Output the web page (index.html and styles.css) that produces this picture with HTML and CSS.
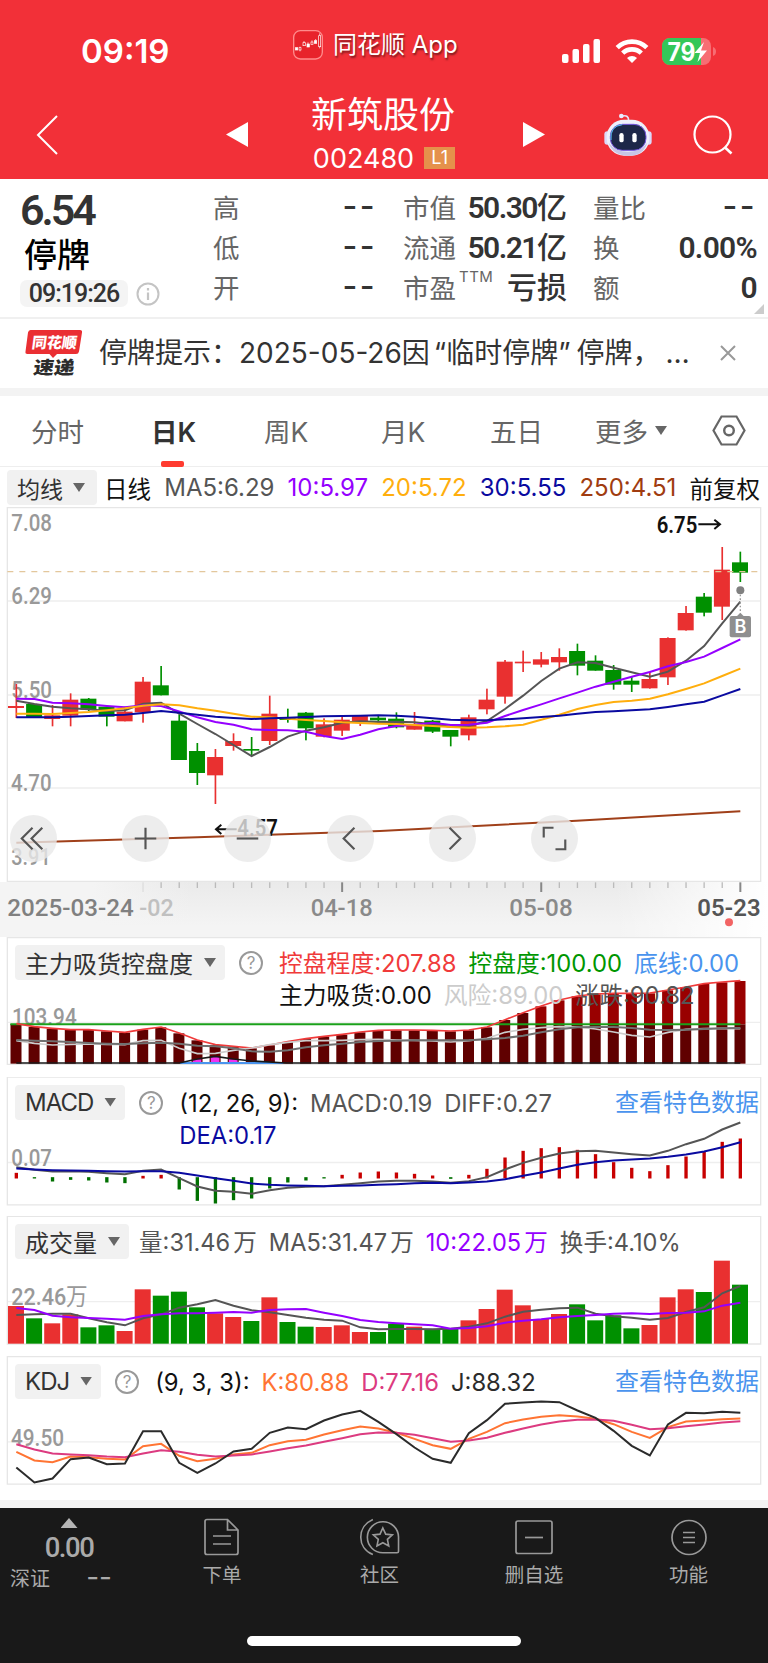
FILE: index.html
```html
<!DOCTYPE html>
<html lang="zh-CN">
	<head>
		<meta charset="UTF-8" />
		<meta name="viewport" content="width=device-width, initial-scale=1.0" />
		<title>新筑股份 002480</title>
		<link rel="stylesheet" href="styles.css">
	</head>
	<body>
		<header class="header">
			<div class="status-bar">
				<span class="clock">09:19</span>
				<div class="app-name">
					<svg width="30" height="30" viewBox="0 0 90 90">
						<rect x="2" y="2" width="86" height="85" rx="20" fill="#e8232b" stroke="#ff8c8c" stroke-width="4" />
						<g fill="#fff" stroke="#fff" stroke-width="2">
							<rect x="7" y="53" width="7" height="7" />
							<rect x="18" y="53" width="6" height="7" fill="none" />
							<path d="M21 50v3M21 60v4M33 33v5M45 37v6M57 31v5M68 27v5M80 10v6M80 50v5" />
							<rect x="30" y="38" width="7" height="9" fill="none" />
							<rect x="42" y="42" width="7" height="9" />
							<rect x="54" y="36" width="6" height="7" fill="none" />
							<rect x="64" y="32" width="7" height="8" />
							<rect x="77" y="17" width="6" height="33" fill="none" />
						</g>
					</svg>
					<span>同花顺 App</span>
				</div>
				<div class="status-icons">
					<svg width="40" height="26" viewBox="0 0 40 26" fill="#fff">
						<rect x="1" y="16" width="6.5" height="9" rx="2" />
						<rect x="11.5" y="11" width="6.5" height="14" rx="2" />
						<rect x="22" y="6" width="6.5" height="19" rx="2" />
						<rect x="32.5" y="1" width="6.5" height="24" rx="2" />
					</svg>
					<svg class="wifi" width="34" height="26" viewBox="0 0 34 26" fill="none" stroke="#fff" stroke-width="4.6">
						<path d="M2.2 9.7a21 21 0 0 1 29.6 0M7.7 15.2a13.3 13.3 0 0 1 18.6 0" />
						<path d="M17 25l-5-5a7.2 7.2 0 0 1 10 0z" fill="#fff" stroke="none" />
					</svg>
					<svg width="54" height="27" viewBox="0 0 54 27">
						<rect width="49" height="27" rx="8" fill="#f76d73" />
						<path d="M8 0h31v27H8a8 8 0 0 1-8-8V8a8 8 0 0 1 8-8z" fill="#34c759" />
						<path d="M51 9q3 1 3 4.5T51 18z" fill="#f76d73" />
						<text class="battery-text" x="5.5" y="22.5" textLength="28" lengthAdjust="spacingAndGlyphs">79</text>
						<path d="M42 4L32.5 15h5.500L35.500 24l9.500-11.500h-6z" fill="#fff" />
					</svg>
				</div>
			</div>
			<div class="title-bar">
				<svg class="back" width="22" height="40" viewBox="0 0 22 40" fill="none" stroke="#fff" stroke-width="2">
					<path d="M21 1L2 20l19 19" />
				</svg>
				<svg class="prev" width="22" height="25" viewBox="0 0 22 25" fill="#fff"><path d="M22 0v25L0 12.500z" /></svg>
				<div class="stock">
					<h1>新筑股份</h1>
					<div class="stock-code"><span>002480</span><i class="level">L1</i></div>
				</div>
				<svg class="next" width="22" height="25" viewBox="0 0 22 25" fill="#fff"><path d="M0 0v25l22-12.500z" /></svg>
				<svg class="robot" width="48" height="45" viewBox="0 0 144 135">
					<path d="M56 12q18-4 18 14" fill="none" stroke="#e5e3f8" stroke-width="5" />
					<circle cx="52" cy="12" r="7" fill="#e9ecff" />
					<rect x="1" y="58" width="18" height="40" rx="9" fill="#dcd9fa" />
					<rect x="125" y="58" width="18" height="40" rx="9" fill="#dcd9fa" />
					<rect x="8" y="23" width="128" height="108" rx="52" fill="#eef0fb" />
					<path d="M14 92q12 38 58 39t58-39q-20 27-58 27T14 92z" fill="#c7c5e6" />
					<rect x="19" y="37" width="107" height="78" rx="36" fill="#1d2748" stroke="#7554df" stroke-width="3" />
					<path d="M21 84q-4-42 34-46" fill="none" stroke="#55c4ef" stroke-width="3" />
					<rect x="46" y="63" width="13" height="28" rx="6.500" fill="#fff" />
					<rect x="85" y="63" width="13" height="28" rx="6.500" fill="#fff" />
				</svg>
				<svg class="search" width="40" height="40" viewBox="0 0 40 40" fill="none" stroke="#fff" stroke-width="2.200">
					<circle cx="19.500" cy="19.500" r="18" />
					<path d="M31.500 32l7 6.500" stroke-width="2.600" />
				</svg>
			</div>
		</header>

		<section class="quote">
			<div class="quote-main">
				<div class="price">6.54</div>
				<div class="halt">停牌</div>
				<div class="quote-time">
					<span class="time-pill">09:19:26</span>
					<svg width="24" height="24" viewBox="0 0 24 24" fill="none" stroke="#c4c4c4" stroke-width="2">
						<circle cx="12" cy="12" r="10.500" />
						<path d="M12 6v2.500M12 10.500v7.500" stroke-width="2.200" />
					</svg>
				</div>
			</div>
			<dl class="quote-col">
				<div><dt>高</dt><dd class="dash">--</dd></div>
				<div><dt>低</dt><dd class="dash">--</dd></div>
				<div><dt>开</dt><dd class="dash">--</dd></div>
			</dl>
			<dl class="quote-col">
				<div><dt>市值</dt><dd>50.30<b>亿</b></dd></div>
				<div><dt>流通</dt><dd>50.21<b>亿</b></dd></div>
				<div><dt>市盈<sup>TTM</sup></dt><dd><b>亏损</b></dd></div>
			</dl>
			<dl class="quote-col">
				<div><dt>量比</dt><dd class="dash">--</dd></div>
				<div><dt>换</dt><dd>0.00%</dd></div>
				<div><dt>额</dt><dd>0</dd></div>
			</dl>
			<span class="corner"></span>
		</section>

		<section class="notice">
			<svg class="notice-logo" width="58" height="48" viewBox="0 0 58 48">
				<path d="M5.500 1H55q2.500 0 2 2.500L54 22.500q-.5 2.500-3 2.500H32l-4 4-3.500-4H2.500Q0 25 .5 22.500L3 3.500Q3.500 1 5.500 1z" fill="#ea2f33" />
				<text class="logo-text" transform="skewX(-8)" x="9" y="19" textLength="45" lengthAdjust="spacingAndGlyphs" fill="#fff" font-size="15">同花顺</text>
				<text class="logo-text" transform="skewX(-8)" x="14" y="45" textLength="41" lengthAdjust="spacingAndGlyphs" fill="#2c2c2c" font-size="18">速递</text>
			</svg>
			<p class="notice-text"><span>停牌提示：</span><span>2025-05-26</span><span>因</span><span>“临时停牌”</span><span>停牌，</span><span>…</span></p>
			<svg width="16" height="16" viewBox="0 0 16 16" stroke="#999" stroke-width="2"><path d="M1 1l14 14M15 1L1 15" /></svg>
		</section>

		<nav class="tabs">
			<a>分时</a>
			<a class="active">日K</a>
			<a>周K</a>
			<a>月K</a>
			<a>五日</a>
			<a>更多<i class="caret"></i></a>
			<svg width="34" height="31" viewBox="0 0 34 31" fill="none" stroke="#666" stroke-width="2.200">
				<path d="M9.500 1.500h15l8 14-8 14h-15l-8-14z" />
				<circle cx="17" cy="15.500" r="4.800" stroke-width="2.400" />
			</svg>
		</nav>

		<div class="ma-legend">
			<span class="picker">均线<i class="caret"></i></span>
			<span class="black cjk">日线</span>
			<span class="gray">MA5:6.29</span>
			<span class="purple">10:5.97</span>
			<span class="orange">20:5.72</span>
			<span class="navy">30:5.55</span>
			<span class="brown">250:4.51</span>
			<span class="black cjk">前复权</span>
		</div>

		<section class="kline">
			<svg id="kline-chart" width="768" height="375" viewBox="0 21 2304 1125"></svg>
			<div class="tools">
				<button><svg viewBox="0 0 48 48"><path d="M23 13L12 24l11 11M33 13L22 24l11 11" /></svg></button>
				<button><svg viewBox="0 0 48 48"><path d="M13 24h22M24 13v22" /></svg></button>
				<button><svg viewBox="0 0 48 48"><path d="M13 24h22" /></svg></button>
				<button><svg viewBox="0 0 48 48"><path d="M28 13L17 24l11 11" /></svg></button>
				<button><svg viewBox="0 0 48 48"><path d="M21 13l11 11-11 11" /></svg></button>
				<button><svg viewBox="0 0 48 48"><path d="M13 23V13h10M25 35h10V25" /></svg></button>
			</div>
		</section>
		<section class="dates">
			<svg id="date-axis" width="768" height="55" viewBox="0 1146 2304 165"></svg>
		</section>

		<section class="panel">
			<svg id="zljc-chart" width="768" height="139.500" viewBox="0 21 2304 418.500"></svg>
			<div class="panel-head">
				<span class="picker">主力吸货控盘度<i class="caret"></i></span>
				<span class="help">?</span>
				<div class="legend">
					<p><span class="red">控盘程度:207.88</span><span class="green">控盘度:100.00</span><span class="blue">底线:0.00</span></p>
					<p><span class="black">主力吸货:0.00</span><span class="light">风险:89.00</span><span class="gray">涨跌:90.82</span></p>
				</div>
			</div>
		</section>

		<section class="panel">
			<svg id="macd-chart" width="768" height="139.500" viewBox="0 439.500 2304 418.500"></svg>
			<div class="panel-head">
				<span class="picker latin">MACD<i class="caret"></i></span>
				<span class="help">?</span>
				<div class="legend">
					<p><span class="black">(12, 26, 9):</span><span class="gray">MACD:0.19</span><span class="gray">DIFF:0.27</span></p>
					<p><span class="navy">DEA:0.17</span></p>
				</div>
				<a class="more">查看特色数据</a>
			</div>
		</section>

		<section class="panel">
			<svg id="volume-chart" width="768" height="139.500" viewBox="0 18 2304 418.500"></svg>
			<div class="panel-head volume">
				<span class="picker">成交量<i class="caret"></i></span>
				<div class="legend">
					<p><span class="gray">量:31.46<em>万</em></span><span class="gray">MA5:31.47<em>万</em></span><span class="purple">10:22.05<em>万</em></span><span class="gray">换手:4.10%</span></p>
				</div>
			</div>
		</section>

		<section class="panel">
			<svg id="kdj-chart" width="768" height="139.500" viewBox="0 436.500 2304 418.500"></svg>
			<div class="panel-head">
				<span class="picker latin">KDJ<i class="caret"></i></span>
				<span class="help">?</span>
				<div class="legend">
					<p><span class="black">(9, 3, 3):</span><span class="k-line">K:80.88</span><span class="d-line">D:77.16</span><span class="j-line">J:88.32</span></p>
				</div>
				<a class="more">查看特色数据</a>
			</div>
		</section>

		<footer class="bottom-bar">
			<div class="actions">
				<div class="index">
					<i class="caret-up"></i>
					<strong>0.00</strong>
					<p><span>深证</span><span class="index-dash">--</span></p>
				</div>
				<a class="action order">
					<svg width="36" height="38" viewBox="0 0 36 38"><path d="M3 1.500h20.500L34 12v22.500q0 2-2 2H3q-2 0-2-2v-31q0-2 2-2zM23.500 1.500V12H34M9 18h18M9 26h18" /></svg>
					<span>下单</span>
				</a>
				<a class="action">
					<svg width="42" height="40" viewBox="0 0 42 40"><path d="M24 4a16.300 16.300 0 0 0 0 32.600h15q1.500 0 1.500-1.500V20A16.300 16.300 0 0 0 24 4zM13.500 1.500C-3.500 9-3.500 31.500 13.500 38.500M24 10.500l3 6.500 7 .8-5.200 4.700 1.400 7-6.200-3.500-6.200 3.500 1.400-7-5.200-4.700 7-.8z" /></svg>
					<span>社区</span>
				</a>
				<a class="action remove">
					<svg width="38" height="38" viewBox="0 0 38 38"><rect x="1" y="3" width="36" height="32.500" rx="2" /><path d="M10 19.500h18" /></svg>
					<span>删自选</span>
				</a>
				<a class="action">
					<svg width="36" height="38" viewBox="0 0 36 38"><circle cx="18" cy="19.500" r="17" /><path d="M12 14.500h12M12 19.500h12M12 24.500h12" /></svg>
					<span>功能</span>
				</a>
			</div>
			<div class="home-indicator"></div>
		</footer>

		<script src="chart.js"></script>
	</body>
</html>
```

FILE: styles.css
```css
:root {
	--red: #f23038;
	--text: #333;
	--muted: #666;
	--line: #f0f0f0;
	--pill: #f1f1f1;
	--ui-font: 'Inter', 'Noto Sans CJK SC', sans-serif;
	--num-font: 'Roboto', 'Noto Sans CJK SC', sans-serif;
}
* {
	box-sizing: border-box;
}
body {
	margin: 0;
	width: 768px;
	height: 1663px;
	overflow: hidden;
	background: #fff;
	color: var(--text);
	font-family: var(--ui-font);
	white-space: nowrap;
}
h1,
p,
dl,
dd {
	margin: 0;
}
svg {
	display: block;
	flex-shrink: 0;
}
i,
em {
	font-style: normal;
}

/* header */
.header {
	height: 179px;
	background: var(--red);
	color: #fff;
}
.status-bar {
	display: flex;
	height: 90px;
	padding-left: 81px;
}
.clock {
	width: 212px;
	padding-top: 31px;
	font-size: 33px;
	line-height: 40px;
	font-weight: 600;
}
.app-name {
	display: flex;
	gap: 10px;
	width: 268px;
	padding-top: 30px;
	font-size: 24px;
	line-height: 30px;
	text-shadow: 1px 2px 2px rgba(0, 0, 0, 0.5);
}
.status-icons {
	display: flex;
	padding-top: 38px;
}
.wifi {
	margin: 0 13px 0 14px;
}
.battery-text {
	font-size: 25px;
	font-weight: 700;
	fill: #fff;
}
.title-bar {
	display: flex;
	align-items: flex-start;
	height: 89px;
	padding-left: 36px;
}
.back {
	margin-top: 25px;
}
.prev {
	margin: 32px 0 0 168px;
}
.stock {
	width: 270px;
	margin-left: 1px;
	text-align: center;
}
.stock h1 {
	font-size: 36px;
	line-height: 50px;
	font-weight: 400;
	text-indent: -2px;
}
.stock-code {
	display: flex;
	align-items: center;
	justify-content: center;
	gap: 10px;
	margin-top: 7px;
	height: 22px;
	font-size: 27px;
}
.level {
	width: 31px;
	height: 22px;
	background: #e5914b;
	font-size: 18px;
	line-height: 22px;
}
.next {
	margin: 32px 0 0 4px;
}
.robot {
	margin: 22px 0 0 59px;
}
.search {
	margin: 25px 0 0 41px;
}

/* quote */
.quote {
	position: relative;
	display: flex;
	height: 140px;
	padding: 9px 11px 0 20px;
	border-bottom: 2px solid var(--line);
}
.quote-main {
	width: 193px;
	flex-shrink: 0;
}
.price {
	height: 48px;
	font-family: var(--num-font);
	font-size: 43px;
	line-height: 44px;
	font-weight: 600;
	letter-spacing: -3px;
}
.halt {
	height: 44px;
	padding-left: 4px;
	font-size: 33px;
	line-height: 38px;
	font-weight: 500;
	color: #000;
}
.quote-time {
	display: flex;
	align-items: center;
	gap: 8px;
}
.time-pill {
	width: 108px;
	height: 27px;
	border-radius: 7px;
	background: #f4f4f4;
	font-family: var(--num-font);
	font-size: 25px;
	line-height: 27px;
	font-weight: 500;
	text-align: center;
	letter-spacing: -1px;
}
.quote-col {
	width: 164px;
	margin-right: 26px;
	flex-shrink: 0;
}
.quote-col:last-of-type {
	margin-right: 0;
}
.quote-col div {
	display: flex;
	justify-content: space-between;
	height: 40px;
	line-height: 40px;
}
.quote-col dt {
	display: flex;
	font-size: 26.500px;
	color: var(--muted);
}
.quote-col sup {
	margin-left: 3px;
	font-size: 15px;
	line-height: 18px;
	letter-spacing: 0.5px;
}
.quote-col dd {
	font-family: var(--num-font);
	font-size: 30px;
	font-weight: 600;
	letter-spacing: -1.5px;
}
.quote-col:last-of-type dd {
	letter-spacing: -0.7px;
}
.quote-col dd b {
	font-weight: 500;
	letter-spacing: 0;
}
.quote-col .dash,
.quote-col:last-of-type .dash {
	font-family: var(--ui-font);
	font-size: 32px;
	line-height: 36px;
	font-weight: 500;
	letter-spacing: 2.500px;
}
.corner {
	position: absolute;
	right: 4px;
	bottom: 3px;
	border-left: 10px solid transparent;
	border-bottom: 10px solid #ccc;
}

/* notice */
.notice {
	display: flex;
	align-items: center;
	height: 77px;
	padding: 0 32px 1px 25px;
	border-bottom: 8px solid #f3f3f3;
}
.notice-logo {
	margin-right: 16px;
	overflow: visible;
}
.logo-text {
	font-family: 'Noto Sans CJK SC', sans-serif;
	font-weight: 900;
}
.notice-text {
	display: flex;
	width: 621px;
	font-size: 28px;
	line-height: 40px;
}
.notice-text span:nth-child(4) { margin-left: 4px; }
.notice-text span:nth-child(5) { margin-left: 6px; }
.notice-text span:nth-child(6) { margin-left: 5px; }

/* period tabs */
.tabs {
	display: flex;
	align-items: center;
	height: 71px;
	padding: 0 0 1px 31px;
	border-bottom: 1px solid #eee;
	font-size: 26.500px;
	color: var(--muted);
}
.tabs a {
	display: flex;
	align-items: center;
	position: relative;
}
.tabs a:nth-child(1) { width: 120px; }
.tabs a:nth-child(2) { width: 113px; }
.tabs a:nth-child(3) { width: 117px; }
.tabs a:nth-child(4) { width: 109px; }
.tabs a:nth-child(5) { width: 105px; }
.tabs a:nth-child(6) { width: 117px; }
.tabs .active {
	font-weight: 600;
	color: var(--text);
}
.active::after {
	content: '';
	position: absolute;
	left: 10px;
	bottom: -17px;
	width: 23px;
	height: 6px;
	border-radius: 2px;
	background: #ff3b30;
}
.caret {
	width: 12px;
	height: 9px;
	background: var(--muted);
	clip-path: polygon(0 0, 100% 0, 50% 100%);
}
.tabs .caret {
	margin-left: 7px;
}

/* legends */
.picker {
	display: flex;
	align-items: center;
	justify-content: space-between;
	height: 35px;
	padding: 0 9px 0 10px;
	border-radius: 4px;
	background: var(--pill);
	font-size: 24px;
	flex-shrink: 0;
}
.latin {
	letter-spacing: -1px;
}
.ma-legend {
	display: flex;
	align-items: center;
	justify-content: space-between;
	height: 40px;
	padding: 1px 8px 0 7px;
	font-size: 24px;
}
.ma-legend .picker {
	width: 90px;
	padding-right: 12px;
	font-size: 23px;
}
.cjk { font-size: 23.500px; }
.picker + .cjk { margin-left: -6px; }
.black { color: #111; }
.gray { color: #555; }
.light { color: #ccc; }
.purple { color: #9500ff; }
.orange { color: #ffae0d; }
.navy { color: #0a0aa0; }
.brown { color: #a03c10; }
.red { color: #f03a3a; }
.green { color: #009600; }
.blue { color: #4a94ee; }
.k-line { color: #ff7433; }
.d-line { color: #dc3b80; }
.j-line { color: #2b2b2b; }

/* k-line */
.kline {
	position: relative;
	height: 375px;
}
.tools {
	position: absolute;
	left: 10px;
	bottom: 20px;
	display: flex;
	gap: 55.3px;
}
.tools button {
	width: 47px;
	height: 47px;
	padding: 0;
	border: none;
	border-radius: 50%;
	background: rgba(232, 232, 232, 0.8);
}
.tools button:first-child {
	margin-right: 9.700px;
}
.tools svg {
	fill: none;
	stroke: #555;
	stroke-width: 2.200;
}
.dates {
	height: 55px;
	background: linear-gradient(to right, #f4f4f4 12%, rgba(244, 244, 244, 0) 25%, rgba(244, 244, 244, 0) 80%, #fff 100%),
		linear-gradient(#eaeaea, #f4f4f4 80%);
}
.axis-text {
	font-family: 'Roboto', sans-serif;
	font-size: 70px;
	font-weight: 500;
	fill: #999;
}
.mark-text {
	font-family: 'Roboto', sans-serif;
	font-size: 70px;
	font-weight: 600;
	fill: #111;
}

/* indicator panels */
.panel {
	display: grid;
	height: 139.500px;
}
.panel > * {
	grid-area: 1 / 1;
}
.panel-head {
	z-index: 1;
	display: flex;
	align-items: flex-start;
	height: 100px;
	padding: 8px 10px 0 15px;
	font-size: 24px;
}
.panel-head .picker .caret {
	margin-left: 11px;
}
.help {
	width: 24px;
	height: 24px;
	margin: 6px 16px 0 14px;
	border: 2px solid #999;
	border-radius: 50%;
	font-size: 17px;
	line-height: 20px;
	text-align: center;
	color: #999;
	flex-shrink: 0;
}
.legend {
	padding-top: 3px;
	font-size: 23.800px;
	line-height: 32px;
}
.legend p {
	display: flex;
	gap: 12px;
}
.volume .legend {
	margin-left: 10px;
	font-size: 23.600px;
}
.legend em {
	margin-left: 3px;
}
.more {
	margin-left: auto;
	margin-right: -1px;
	line-height: 36px;
	color: #4a94ee;
}

/* bottom bar */
.bottom-bar {
	height: 168px;
	margin-top: 5px;
	border-top: 8px solid #f3f3f3;
	background: #191919;
	color: #aaa;
}
.actions {
	display: flex;
	height: 128px;
	padding-top: 10px;
}
.index {
	width: 138px;
	text-align: center;
}
.caret-up {
	display: block;
	width: 17px;
	height: 10px;
	margin: 0 auto;
	background: #b5b5b5;
	clip-path: polygon(0 100%, 100% 100%, 50% 0);
}
.index strong {
	display: block;
	font-family: var(--num-font);
	font-size: 27.500px;
	line-height: 40px;
	font-weight: 500;
	letter-spacing: -1.5px;
}
.index p {
	display: flex;
	justify-content: space-between;
	padding: 0 26px 0 10px;
	font-size: 20px;
	line-height: 23px;
}
.index-dash {
	font-size: 28px;
	line-height: 19px;
}
.action {
	display: flex;
	flex-direction: column;
	align-items: center;
	width: 147px;
	font-size: 19.500px;
	line-height: 26px;
}
.action svg {
	height: 38px;
	margin-bottom: 6px;
	fill: none;
	stroke: #999;
	stroke-width: 1.700;
}
.order {
	width: 168px;
}
.remove {
	width: 162px;
}
.home-indicator {
	width: 274px;
	height: 10px;
	margin: 0 auto;
	border-radius: 5px;
	background: #fff;
}
```

FILE: chart.js
```js
const RED = '#e93030';
const GREEN = '#009000';
const COUNT = 41;
const x = (i) => 49 + 54.3 * i;

// direction, high, body top, body bottom, low
const candles = [
	['r', 552, 618, 624, 654], ['g', 612, 612, 652, 652], ['r', 615, 646, 657, 679],
	['r', 580, 599, 647, 679], ['g', 594, 596, 629, 633], ['g', 618, 620, 650, 679],
	['r', 620, 635, 664, 664], ['r', 531, 545, 637, 668], ['g', 498, 556, 586, 586],
	['g', 643, 662, 780, 780], ['g', 729, 753, 819, 855], ['r', 747, 771, 826, 912],
	['r', 700, 723, 738, 752], ['g', 711, 747, 752, 768], ['r', 587, 641, 723, 735],
	['g', 626, 654, 660, 668], ['g', 636, 638, 685, 721], ['r', 655, 673, 710, 712],
	['r', 650, 659, 692, 708], ['r', 645, 648, 666, 678], ['g', 645, 653, 661, 664],
	['g', 637, 656, 682, 685], ['r', 636, 674, 689, 689], ['g', 660, 662, 695, 699],
	['g', 690, 690, 710, 739], ['r', 644, 652, 706, 721], ['r', 566, 599, 628, 643],
	['r', 480, 485, 590, 611], ['r', 452, 485, 490, 516], ['r', 456, 478, 494, 502],
	['r', 445, 471, 487, 512], ['g', 431, 453, 497, 526], ['g', 466, 482, 512, 512],
	['g', 495, 510, 554, 569], ['g', 530, 542, 554, 576], ['r', 515, 537, 565, 566],
	['r', 412, 414, 532, 555], ['r', 318, 339, 391, 392], ['g', 279, 290, 338, 349],
	['r', 141, 209, 320, 360], ['g', 155, 187, 218, 246]
];
const ma5 = [602, 612, 620, 625, 628, 633, 631, 611, 608, 641, 672, 702, 735, 768, 741, 710, 692, 682, 668, 664, 666, 665, 667, 673, 680, 678, 663, 627, 587, 543, 506, 487, 489, 503, 517, 530, 515, 482, 438, 370, 305];
const ma10 = [596, 597, 608, 610, 613, 618, 622, 616, 618, 634, 652, 666, 674, 688, 690, 691, 695, 708, 717, 704, 688, 678, 674, 668, 675, 674, 668, 648, 630, 613, 595, 578, 560, 545, 530, 516, 499, 486, 470, 444, 418];
const ma20 = [641, 641, 642, 639, 636, 631, 625, 617, 613, 616, 625, 632, 641, 650, 652, 656, 660, 663, 667, 669, 671, 672, 675, 678, 681, 683, 682, 679, 674, 659, 644, 627, 615, 606, 602, 596, 583, 567, 550, 528, 506];
const ma30 = [652, 652, 652, 650, 648, 646, 644, 639, 633, 638, 644, 650, 654, 657, 655, 653, 651, 649, 648, 647, 646, 647, 650, 655, 659, 661, 661, 658, 655, 651, 647, 641, 636, 634, 631, 628, 621, 613, 605, 586, 567];

const controlTops = [282, 291, 296, 300, 300, 304, 308, 299, 292, 310, 331, 345, 350, 355, 346, 336, 327, 320, 314, 307, 302, 301, 301, 302, 304, 301, 292, 270, 249, 229, 211, 199, 193, 191, 191, 190, 181, 172, 162, 157, 153];
const risk = [332, 340, 345, 343, 342, 343, 344, 332, 331, 355, 371, 370, 361, 354, 344, 337, 332, 332, 331, 329, 328, 330, 331, 333, 336, 332, 325, 307, 298, 293, 290, 291, 297, 306, 316, 321, 307, 298, 296, 295, 296];
const change = [330, 332, 334, 336, 339, 341, 342, 340, 338, 341, 347, 349, 355, 364, 365, 361, 352, 346, 341, 336, 333, 332, 331, 331, 331, 331, 328, 324, 317, 307, 298, 292, 291, 291, 294, 299, 300, 299, 297, 295, 294];

const macd = [727, -744, -753, -748, -750, -756, -758, 736, 733, -777, -811, -819, -809, -804, -774, -756, -750, -744, 733, 726, 723, 726, 730, 735, -745, 733, 715, 681, 661, 653, 650, 658, 671, 695, 712, 722, 704, 678, 663, 634, 624];
const diff = [710, 718, 723, 722, 724, 728, 731, 721, 717, 743, 768, 781, 784, 790, 779, 772, 769, 767, 763, 758, 753, 751, 751, 753, 757, 752, 740, 717, 697, 682, 669, 662, 661, 666, 671, 675, 661, 641, 625, 597, 576];
const dea = [714, 717, 719, 720, 721, 722, 723, 722, 722, 727, 735, 743, 751, 759, 763, 765, 766, 767, 766, 765, 763, 761, 758, 757, 758, 756, 753, 746, 736, 726, 714, 703, 695, 690, 687, 684, 679, 672, 663, 650, 635];

const volumes = [288, -325, 340, 313, -352, -346, 363, 238, -257, -245, -292, 310, 321, -333, 262, -336, -350, 351, 346, 366, -366, -341, 350, -357, -357, 331, 297, 239, 286, 327, 312, -283, -331, -316, -355, 345, 262, 238, -246, 152, -224];
const volMa5 = [315, 313, 311, 311, 325, 337, 346, 325, 313, 293, 283, 270, 287, 301, 307, 315, 323, 329, 332, 352, 358, 357, 357, 358, 356, 350, 340, 320, 305, 299, 295, 293, 311, 319, 323, 329, 324, 306, 292, 250, 228];
const volMa10 = [294, 300, 317, 322, 324, 326, 329, 318, 313, 310, 310, 308, 306, 308, 300, 298, 297, 308, 318, 330, 336, 340, 343, 346, 356, 354, 349, 338, 332, 328, 322, 318, 315, 311, 310, 312, 309, 308, 304, 287, 278];

const kdjJ = [771, 816, 804, 746, 741, 761, 759, 662, 662, 757, 787, 759, 723, 715, 667, 651, 656, 630, 612, 601, 634, 671, 711, 745, 757, 668, 629, 580, 576, 573, 575, 600, 622, 661, 706, 735, 642, 607, 608, 604, 607];
const kdjK = [724, 750, 755, 738, 740, 745, 747, 707, 700, 736, 752, 745, 732, 727, 704, 692, 688, 672, 659, 648, 654, 667, 685, 704, 715, 685, 664, 638, 627, 619, 614, 618, 625, 641, 664, 682, 650, 633, 630, 626, 624];
const kdjD = [701, 717, 729, 732, 734, 738, 740, 729, 719, 724, 733, 738, 735, 732, 723, 713, 705, 694, 683, 671, 666, 667, 673, 683, 694, 690, 682, 667, 654, 642, 633, 628, 627, 631, 643, 656, 653, 647, 642, 636, 632];

function rect(cx, top, bottom, width, fill) {
	return `<rect x="${cx - width / 2}" y="${top}" width="${width}" height="${bottom - top}" fill="${fill}"/>`;
}

function line(points, color, width = 5) {
	const d = points.map((y, i) => `${x(i)},${y}`).join(' ');
	return `<polyline points="${d}" fill="none" stroke="${color}" stroke-width="${width}"/>`;
}

function path(d, color, width, extra = '') {
	return `<path d="${d}" fill="none" stroke="${color}" stroke-width="${width}" ${extra}/>`;
}

function text(str, tx, ty, length, cls = 'axis-text', extra = '') {
	return `<text class="${cls}" x="${tx}" y="${ty}" textLength="${length}" lengthAdjust="spacingAndGlyphs" ${extra}>${str}</text>`;
}

function frame(top, bottom, grid) {
	let out = path(`M22 ${top}H2282V${bottom}H22Z`, '#e6e6e6', 4);
	grid.forEach((y) => (out += path(`M24 ${y}H2280`, '#eee', 4)));
	return out;
}

function render(id, markup) {
	document.getElementById(id).innerHTML = markup;
}

function drawKline() {
	let out = frame(23, 1144, [303, 585, 864]);
	out += text('7.08', 34, 92, 122) + text('6.29', 34, 313, 122) + text('5.50', 34, 593, 122);
	out += text('4.70', 33, 873, 122) + text('3.91', 34, 1096, 118);
	candles.forEach(([dir, high, top, bottom, low], i) => {
		const color = dir === 'r' ? RED : GREEN;
		out += rect(x(i), high, low, 5, color) + rect(x(i) - 1, top, bottom, 48, color);
	});
	out += path('M22 215H2280', '#e3c79c', 4, 'stroke-dasharray="18 18"');
	out += path('M49 1028L592 1012L1140 993L1730 962L2221 934', '#a0401a', 6);
	out += line(ma5, '#555', 6) + line(ma10, '#9500ff', 6) + line(ma20, '#ffae0d', 6) + line(ma30, '#0a0aa0', 6);
	out += text('6.75', 1970, 98, 122, 'mark-text') + path('M2095 73H2160M2143 59L2160 73L2143 87', '#111', 6);
	out += text('4.57', 712, 1009, 122, 'mark-text') + path('M710 988H648M664 974L648 988L664 1002', '#111', 6);
	// buy marker
	out += '<circle cx="2221" cy="271" r="12" fill="#808080"/>';
	out += path('M2221 284V340', '#999', 4, 'stroke-dasharray="5 6"');
	out += '<rect x="2189" y="348" width="64" height="64" rx="6" fill="#8f8f8f"/><path d="M2209 350l12-12 12 12z" fill="#8f8f8f"/>';
	out += '<text x="2221" y="400" font-size="54" font-weight="600" text-anchor="middle" fill="#fff">B</text>';
	render('kline-chart', out);
}

function drawDates() {
	let out = '';
	for (let i = 7; i < COUNT; i++) {
		const major = i === 18 || i === 29 || i === 40;
		const long = major || i === 7;
		const color = i === 7 ? '#ddd' : major ? '#888' : '#bbb';
		out += path(`M${x(i)} 1147V${long ? 1176 : 1164}`, color, major ? 6 : 4);
	}
	out += text('2025-03-24', 22, 1249, 379, 'axis-text', 'style="fill:#808080"');
	out += text('-02', 418, 1249, 103, 'axis-text', 'style="fill:#c0c0c0"');
	out += text('04-18', 932, 1249, 186, 'axis-text', 'style="fill:#8a8a8a"');
	out += text('05-08', 1528, 1249, 190, 'axis-text', 'style="fill:#8a8a8a"');
	out += text('05-23', 2092, 1249, 190, 'mark-text', 'style="fill:#555"');
	out += '<circle cx="2187" cy="1267" r="12" fill="#f26464"/>';
	render('date-axis', out);
}

function drawControl() {
	let out = frame(23, 403, [277]);
	controlTops.forEach((top, i) => {
		if (i > 28) {
			out += rect(x(i) - 1, top, 283, 33, '#990000') + rect(x(i) - 1, 283, 401, 33, '#600000');
		} else {
			out += rect(x(i) - 1, top, 401, 33, '#600000');
		}
	});
	[[10, 388], [11, 381], [12, 388]].forEach(([i, top]) => (out += rect(x(i) - 1, top, 399, 26, '#f032f0')));
	out += text('103.94', 36, 286, 194);
	out += path('M31 283H2221', '#1aa01a', 6);
	out += line(controlTops.map((y) => y - 1), '#f03a3a');
	out += line(risk, '#ccc') + line(change, '#707070', 6);
	out += path('M540 399H850', '#4a94ee', 6);
	out += path('M49 399H538L592 387L646 379L700 387L755 393L860 399H2221', '#181818', 5);
	render('zljc-chart', out);
}

function drawMacd() {
	let out = frame(440, 823, [696]) + text('0.07', 34, 706, 122);
	macd.forEach((v, i) => {
		out += v > 0 ? rect(x(i), v, 744, 10, '#c80000') : rect(x(i), 740, -v, 10, '#007000');
	});
	out += line(diff, '#555', 6) + line(dea, '#0a0aa0', 6);
	render('macd-chart', out);
}

function drawVolume() {
	let out = frame(19, 402, [275]) + text('22.46万', 34, 284, 229);
	volumes.forEach((v, i) => (out += rect(x(i) - 1, Math.abs(v), 401, 48, v > 0 ? RED : GREEN)));
	out += line(volMa5, '#555', 6) + line(volMa10, '#9500ff', 6);
	render('volume-chart', out);
}

function drawKdj() {
	let out = frame(438, 821, [694]) + text('49.50', 33, 705, 159);
	out += line(kdjK, '#ff7433', 6) + line(kdjD, '#dc3b80', 6) + line(kdjJ, '#2b2b2b', 6);
	render('kdj-chart', out);
}

drawKline();
drawDates();
drawControl();
drawMacd();
drawVolume();
drawKdj();
```
